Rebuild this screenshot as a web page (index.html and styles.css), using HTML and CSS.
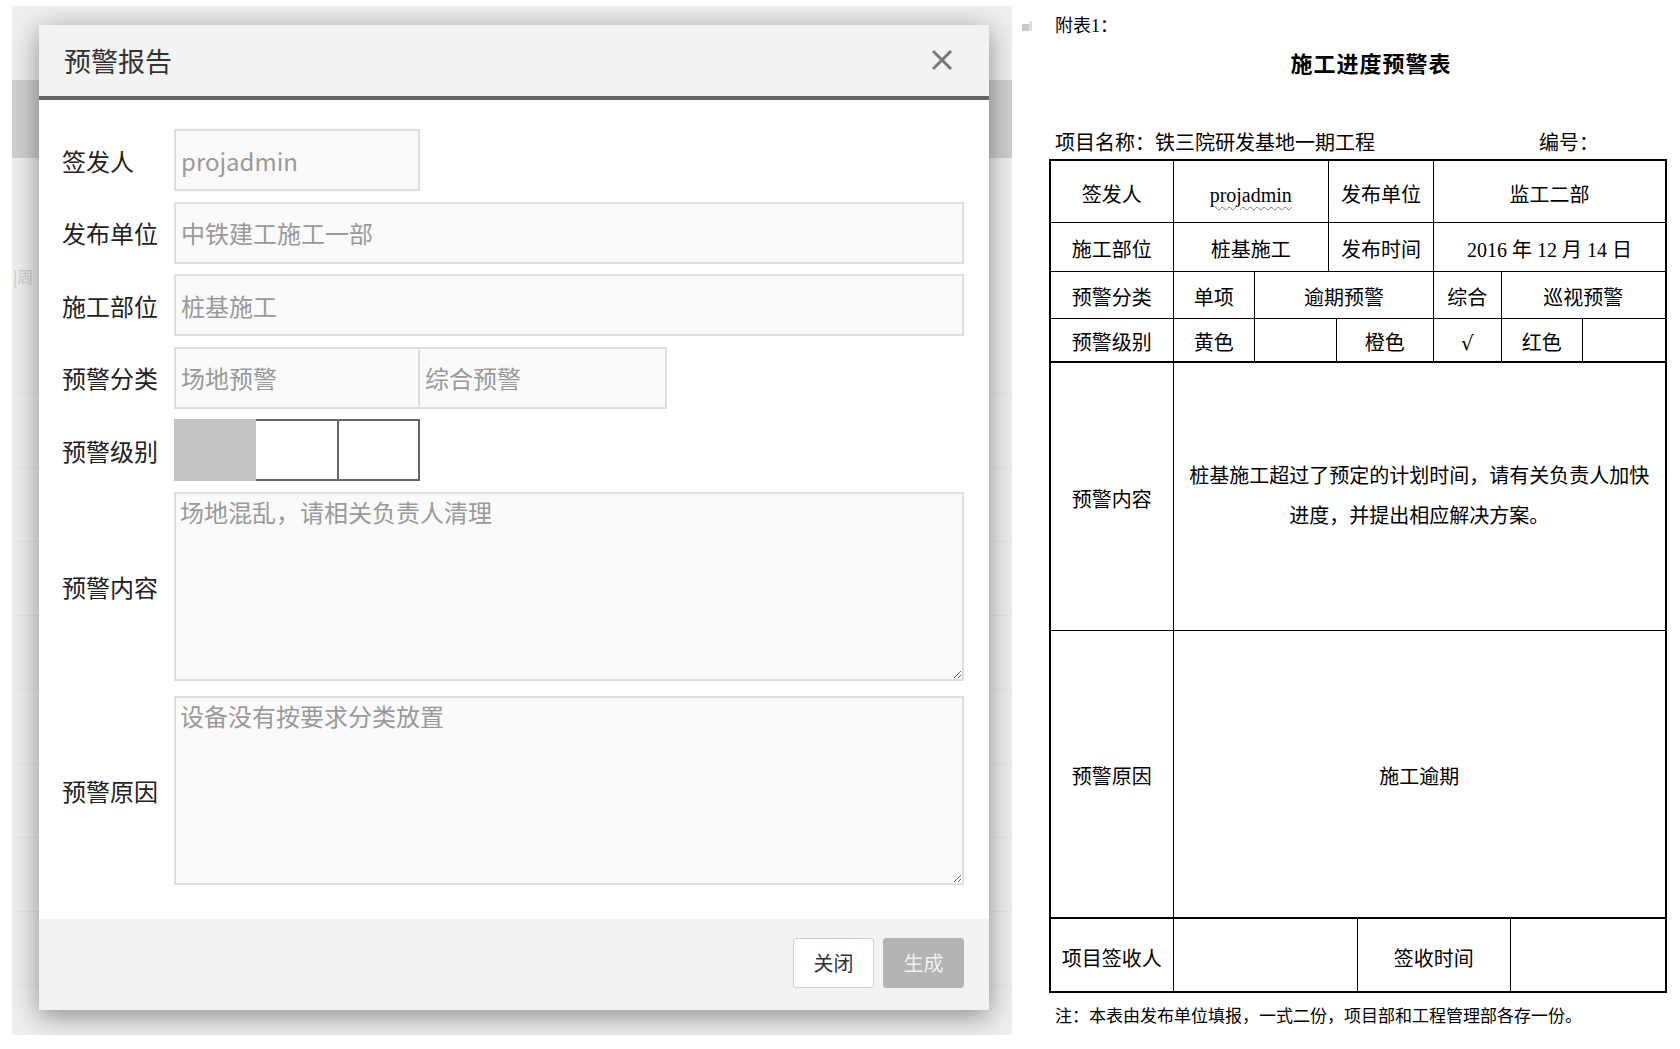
FILE: index.html
```html
<!DOCTYPE html>
<html lang="zh-CN">
<head>
<meta charset="utf-8">
<title>预警报告</title>
<link rel="stylesheet" href="styles.css">
</head>
<body>
<div class="screen">
  <section class="shot">
    <div class="backdrop">
      <div class="bd-band"></div>
      <div class="bd-row bd-first"><span class="bd-txt">|周</span></div>
      <div class="bd-row"></div>
      <div class="bd-row"></div>
      <div class="bd-row"></div>
      <div class="bd-row"></div>
      <div class="bd-row"></div>
      <div class="bd-row"></div>
      <div class="bd-row"></div>
      <div class="bd-row"></div>
      <div class="bd-row"></div>
    </div>
    <div class="modal">
      <header class="modal-head">
        <h2 class="modal-title">预警报告</h2>
        <svg class="modal-close" width="22" height="22" viewBox="0 0 22 22"><path d="M2 2 L20 20 M20 2 L2 20" stroke="#777" stroke-width="3" fill="none"/></svg>
      </header>
      <div class="modal-body">
        <div class="row"><span class="lbl">签发人</span><div class="field short">projadmin</div></div>
        <div class="row"><span class="lbl">发布单位</span><div class="field">中铁建工施工一部</div></div>
        <div class="row"><span class="lbl">施工部位</span><div class="field">桩基施工</div></div>
        <div class="row"><span class="lbl">预警分类</span><div class="pair"><div class="field short">场地预警</div><div class="field short second">综合预警</div></div></div>
        <div class="row"><span class="lbl">预警级别</span><div class="levels"><div class="lv lv1"></div><div class="lv lv2"></div><div class="lv lv3"></div></div></div>
        <div class="row tall"><span class="lbl">预警内容</span><textarea class="ta" readonly>场地混乱，请相关负责人清理</textarea></div>
        <div class="row tall"><span class="lbl">预警原因</span><textarea class="ta" readonly>设备没有按要求分类放置</textarea></div>
      </div>
      <footer class="modal-foot">
        <button class="btn btn-close">关闭</button>
        <button class="btn btn-gen">生成</button>
      </footer>
    </div>
  </section>

  <section class="doc">
    <div class="doc-top">
      <svg class="doc-mark" width="10" height="10" viewBox="0 0 10 10"><path d="M0 3 H7 V10 H0 Z" fill="#c8c8c8"/><path d="M7 0 H10 V10 H7 Z" fill="#dedede"/></svg>
      <span class="doc-pre">附表1：</span>
    </div>
    <h1 class="doc-title">施工进度预警表</h1>
    <div class="doc-meta"><span>项目名称：铁三院研发基地一期工程</span><span class="doc-no">编号：</span></div>
    <table class="doc-table">
      <colgroup>
        <col class="c1"><col class="c2"><col class="c3"><col class="c4"><col class="c5"><col class="c6"><col class="c7"><col class="c8"><col class="c9"><col class="c10">
      </colgroup>
      <tr class="r1">
        <td>签发人</td>
        <td colspan="2"><span class="wavy">projadmin</span></td>
        <td colspan="3">发布单位</td>
        <td colspan="4">监工二部</td>
      </tr>
      <tr class="r2">
        <td>施工部位</td>
        <td colspan="2">桩基施工</td>
        <td colspan="3">发布时间</td>
        <td colspan="4">2016 年 12 月 14 日</td>
      </tr>
      <tr class="r3">
        <td>预警分类</td>
        <td>单项</td>
        <td colspan="4">逾期预警</td>
        <td>综合</td>
        <td colspan="3">巡视预警</td>
      </tr>
      <tr class="r4">
        <td>预警级别</td>
        <td>黄色</td>
        <td colspan="2"></td>
        <td colspan="2">橙色</td>
        <td class="tick">√</td>
        <td colspan="2">红色</td>
        <td></td>
      </tr>
      <tr class="r5">
        <td>预警内容</td>
        <td colspan="9" class="content">桩基施工超过了预定的计划时间，请有关负责人加快<br>进度，并提出相应解决方案。</td>
      </tr>
      <tr class="r6">
        <td>预警原因</td>
        <td colspan="9">施工逾期</td>
      </tr>
      <tr class="r7">
        <td>项目签收人</td>
        <td colspan="4"></td>
        <td colspan="3">签收时间</td>
        <td colspan="2"></td>
      </tr>
    </table>
    <p class="doc-note">注：本表由发布单位填报，一式二份，项目部和工程管理部各存一份。</p>
  </section>
</div>
</body>
</html>
```

FILE: styles.css
```css
* { box-sizing: border-box; }

html, body {
  margin: 0;
  padding: 0;
  background: #fff;
}

body {
  font-family: "Noto Sans CJK SC", "Noto Sans", sans-serif;
  color: #222;
}

.screen {
  display: flex;
  width: 1680px;
  height: 1049px;
  overflow: hidden;
}

/* ---------- left screenshot ---------- */
.shot {
  flex: none;
  width: 1000px;
  height: 1029px;
  margin: 6px 0 0 12px;
  background: #efefef;
  position: relative;
  overflow: hidden;
}

.backdrop {
  height: 100%;
}

.bd-band {
  margin-top: 74px;
  height: 78px;
  background: #d0d0d0;
}

.bd-row {
  height: 74px;
  border-bottom: 1px solid #e6e6e6;
  display: flex;
  align-items: center;
}

.bd-first {
  height: 236px;
}

.bd-txt {
  font-size: 16px;
  color: #cdcdcd;
  margin-left: 1px;
  white-space: nowrap;
}

.modal {
  position: absolute;
  left: 27px;
  top: 19px;
  width: 950px;
  background: #fff;
  box-shadow: 0 6px 26px rgba(0, 0, 0, 0.42);
  display: flex;
  flex-direction: column;
}

.modal-head {
  height: 75px;
  background: #f3f3f3;
  border-bottom: 4px solid #666;
  display: flex;
  align-items: center;
  justify-content: space-between;
  padding: 0 36px 0 25px;
}

.modal-title {
  margin: 0;
  font-size: 27px;
  font-weight: normal;
  color: #333;
}

.modal-close {
  display: block;
  margin-top: -2px;
}

.modal-body {
  padding: 29px 25px 34px 23px;
  display: flex;
  flex-direction: column;
}

.row {
  display: flex;
  align-items: center;
}

.row + .row {
  margin-top: 10.5px;
}

.row.tall + .row.tall {
  margin-top: 15px;
}

.lbl {
  flex: none;
  width: 112px;
  font-size: 24px;
  color: #222;
  white-space: nowrap;
}

.field {
  flex: 1;
  height: 62px;
  border: 2px solid #dedede;
  background: #fafafa;
  color: #999;
  font-size: 24px;
  padding-left: 5px;
  display: flex;
  align-items: center;
  white-space: nowrap;
}

.field.short {
  flex: none;
  width: 246px;
}

.pair {
  display: flex;
}

.field.second {
  width: 249px;
  margin-left: -2px;
}

.levels {
  display: flex;
  height: 62px;
}

.lv {
  height: 62px;
}

.lv1 {
  width: 82px;
  background: #c4c4c4;
}

.lv2 {
  width: 83px;
  background: #fff;
  border: 2px solid #666;
  border-left: none;
}

.lv3 {
  width: 81px;
  background: #fff;
  border: 2px solid #666;
  border-left: none;
}

.ta {
  flex: 1;
  height: 189px;
  border: 2px solid #dedede;
  background: #fafafa;
  color: #999;
  font-family: "Noto Sans CJK SC", sans-serif;
  font-size: 24px;
  line-height: 1.3;
  padding: 2px 4px;
  margin: 0;
  resize: both;
  outline: none;
}

.modal-foot {
  height: 91px;
  background: #f3f3f3;
  display: flex;
  justify-content: flex-end;
  align-items: flex-start;
  gap: 9px;
  padding: 19px 25px 0 0;
}

.btn {
  width: 81px;
  height: 50px;
  font-family: "Noto Sans CJK SC", sans-serif;
  font-size: 20px;
  border-radius: 3px;
  padding: 0;
}

.btn-close {
  background: #fff;
  border: 1px solid #cfcfcf;
  color: #333;
}

.btn-gen {
  background: #b4b4b4;
  border: 1px solid #b4b4b4;
  color: #f2f2f2;
}

/* ---------- right document ---------- */
.doc {
  flex: 1;
  padding: 0 15px 0 37px;
  font-family: "Liberation Serif", "Noto Sans CJK SC", serif;
  color: #000;
}

.doc-top {
  margin: 14px 0 0 -27px;
  height: 24px;
  display: flex;
  align-items: center;
  gap: 23px;
}

.doc-mark {
  flex: none;
}

.doc-pre {
  font-size: 18px;
  line-height: 24px;
}

.doc-title {
  margin: 9px 0 0;
  padding-left: 26px;
  text-align: center;
  font-family: "Noto Sans CJK SC", sans-serif;
  font-size: 22px;
  line-height: 30px;
  font-weight: bold;
  letter-spacing: 1px;
}

.doc-meta {
  display: flex;
  margin-top: 51px;
  padding: 0 68px 0 6px;
  font-size: 20px;
  line-height: 30px;
}

.doc-no {
  margin-left: auto;
}

.doc-table {
  width: 616px;
  margin-top: 1px;
  table-layout: fixed;
  border-collapse: collapse;
  border: 2px solid #000;
}

.doc-table td {
  border: 1px solid #000;
  padding: 7px 0 0;
  text-align: center;
  vertical-align: middle;
  font-size: 20px;
  line-height: 1.2;
  white-space: nowrap;
}

.c1 { width: 123px; }
.c2 { width: 81.5px; }
.c3 { width: 74px; }
.c4 { width: 7.5px; }
.c5 { width: 21px; }
.c6 { width: 76.5px; }
.c7 { width: 67.5px; }
.c8 { width: 9.6px; }
.c9 { width: 72px; }
.c10 { width: 83.4px; }

.r1 { height: 62px; }
.r2 { height: 49px; }
.r3 { height: 47px; }
.r4 { height: 44px; }
.r5 { height: 268px; }
.r6 { height: 288px; }
.r7 { height: 74px; }

.r4 td { border-bottom-width: 2px; }
.r6 td { border-bottom-width: 2px; }

.doc-table td.content {
  line-height: 40px;
  padding: 0;
}

.wavy {
  text-decoration: underline wavy #777;
  text-decoration-thickness: 1px;
  text-underline-offset: 4px;
}

.tick {
  font-family: "DejaVu Sans", sans-serif;
  font-size: 18px;
}

.doc-note {
  margin: 12px 0 0;
  padding-left: 6px;
  font-size: 17px;
  line-height: 24px;
}
```
